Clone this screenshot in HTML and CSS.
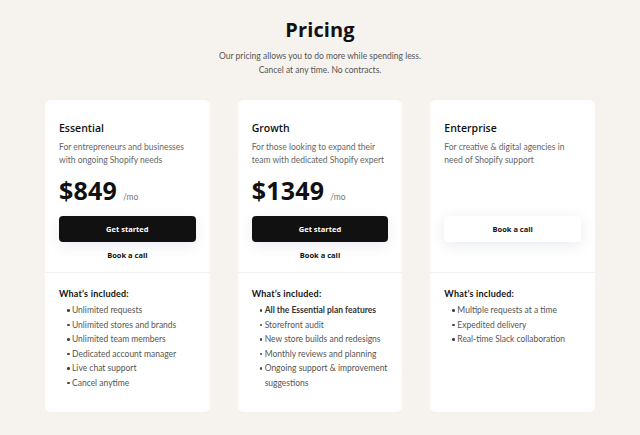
FILE: index.html
```html
<!DOCTYPE html>
<html lang="en">
<head>
<meta charset="utf-8">
<title>Pricing</title>
<link rel="stylesheet" href="styles.css">
</head>
<body>
<main class="page">
  <header class="intro">
    <h1 class="intro-title">Pricing</h1>
    <p class="intro-text">Our pricing allows you to do more while spending less.<br>Cancel at any time. No contracts.</p>
  </header>
  <section class="plans">
    <article class="card">
      <div class="card-head">
        <h2 class="plan-name">Essential</h2>
        <p class="plan-desc">For entrepreneurs and businesses with ongoing Shopify needs</p>
        <p class="plan-price"><span class="amount">$849</span><span class="per">/mo</span></p>
        <a class="btn btn-dark" href="#">Get started</a>
        <a class="link-call" href="#">Book a call</a>
      </div>
      <div class="card-body">
        <h3 class="incl-title">What’s included:</h3>
        <ul class="incl-list">
          <li>Unlimited requests</li>
          <li>Unlimited stores and brands</li>
          <li>Unlimited team members</li>
          <li>Dedicated account manager</li>
          <li>Live chat support</li>
          <li>Cancel anytime</li>
        </ul>
      </div>
    </article>
    <article class="card">
      <div class="card-head">
        <h2 class="plan-name">Growth</h2>
        <p class="plan-desc">For those looking to expand their team with dedicated Shopify expert</p>
        <p class="plan-price"><span class="amount">$1349</span><span class="per">/mo</span></p>
        <a class="btn btn-dark" href="#">Get started</a>
        <a class="link-call" href="#">Book a call</a>
      </div>
      <div class="card-body">
        <h3 class="incl-title">What’s included:</h3>
        <ul class="incl-list">
          <li class="strong">All the Essential plan features</li>
          <li>Storefront audit</li>
          <li>New store builds and redesigns</li>
          <li>Monthly reviews and planning</li>
          <li>Ongoing support &amp; improvement suggestions</li>
        </ul>
      </div>
    </article>
    <article class="card">
      <div class="card-head">
        <h2 class="plan-name">Enterprise</h2>
        <p class="plan-desc">For creative &amp; digital agencies in need of Shopify support</p>
        <a class="btn btn-light btn-last" href="#">Book a call</a>
      </div>
      <div class="card-body">
        <h3 class="incl-title">What’s included:</h3>
        <ul class="incl-list">
          <li>Multiple requests at a time</li>
          <li>Expedited delivery</li>
          <li>Real-time Slack collaboration</li>
        </ul>
      </div>
    </article>
  </section>
</main>
</body>
</html>
```
FILE: styles.css
```css
* { box-sizing: border-box; }
html, body { margin: 0; padding: 0; }
body {
  background: #f6f3ef;
  font-family: "Lato", "Open Sans", sans-serif;
  color: #222;
  width: 640px;
  height: 435px;
  overflow: hidden;
}
.page {
  width: 550px;
  margin: 0 auto;
  padding-top: 16px;
}
.intro { text-align: center; }
.intro-title {
  margin: 0;
  font-family: "Open Sans", sans-serif;
  font-weight: 700;
  font-size: 20px;
  line-height: 28px;
  color: #111;
  letter-spacing: 0.1px;
}
.intro-text {
  margin: 5px 0 0;
  font-size: 8.5px;
  line-height: 14px;
  color: #555;
}
.plans {
  margin-top: 23px;
  height: 312px;
  display: grid;
  grid-template-columns: repeat(3, 1fr);
  grid-template-rows: auto 1fr;
  column-gap: 28px;
}
.card {
  grid-row: span 2;
  display: grid;
  grid-template-rows: subgrid;
  background: #fff;
  border-radius: 6px;
}
.card-head {
  display: flex;
  flex-direction: column;
  padding: 20px 14px 10px;
  border-bottom: 1px solid #f1f0ee;
}
.plan-name {
  margin: 0;
  font-family: "Open Sans", sans-serif;
  font-weight: 600;
  font-size: 10.5px;
  line-height: 16px;
  color: #111;
}
.plan-desc {
  margin: 5px 0 0;
  font-size: 8.5px;
  line-height: 13px;
  color: #666;
}
.plan-price {
  margin: 8px 0 0;
  line-height: 30px;
  display: flex;
  align-items: baseline;
}
.amount {
  font-family: "Open Sans", sans-serif;
  font-weight: 700;
  font-size: 25px;
  color: #111;
  letter-spacing: 0.2px;
}
.per {
  margin-left: 6px;
  font-size: 8.5px;
  color: #777;
}
.btn {
  display: flex;
  align-items: center;
  justify-content: center;
  height: 26px;
  margin-top: 4px;
  border-radius: 4px;
  font-family: "Open Sans", sans-serif;
  font-weight: 700;
  font-size: 7.5px;
  text-decoration: none;
}
.btn-dark {
  background: #111;
  color: #fff;
  box-shadow: 0 4px 14px rgba(70, 80, 160, 0.10);
}
.btn-light {
  background: #fff;
  color: #111;
  box-shadow: 0 3px 14px rgba(70, 80, 160, 0.12);
}
.btn-last {
  margin-top: auto;
  margin-bottom: 20px;
}
.link-call {
  margin-top: 6px;
  text-align: center;
  line-height: 14px;
  font-family: "Open Sans", sans-serif;
  font-weight: 700;
  font-size: 7.5px;
  color: #111;
  text-decoration: none;
}
.card-body {
  padding: 14px 14px 0;
}
.incl-title {
  margin: 0;
  font-size: 9px;
  line-height: 14px;
  font-weight: 700;
  letter-spacing: 0.2px;
  color: #111;
}
.incl-list {
  margin: 2px 0 0;
  padding: 0 0 0 13px;
  list-style: none;
}
.incl-list li {
  position: relative;
  font-size: 8.5px;
  line-height: 14.5px;
  color: #555;
}
.incl-list li::before {
  content: "";
  position: absolute;
  left: -5px;
  top: 6px;
  width: 2.5px;
  height: 2.5px;
  border-radius: 50%;
  background: #444;
}
.incl-list li.strong {
  font-weight: 700;
  color: #333;
}
```
